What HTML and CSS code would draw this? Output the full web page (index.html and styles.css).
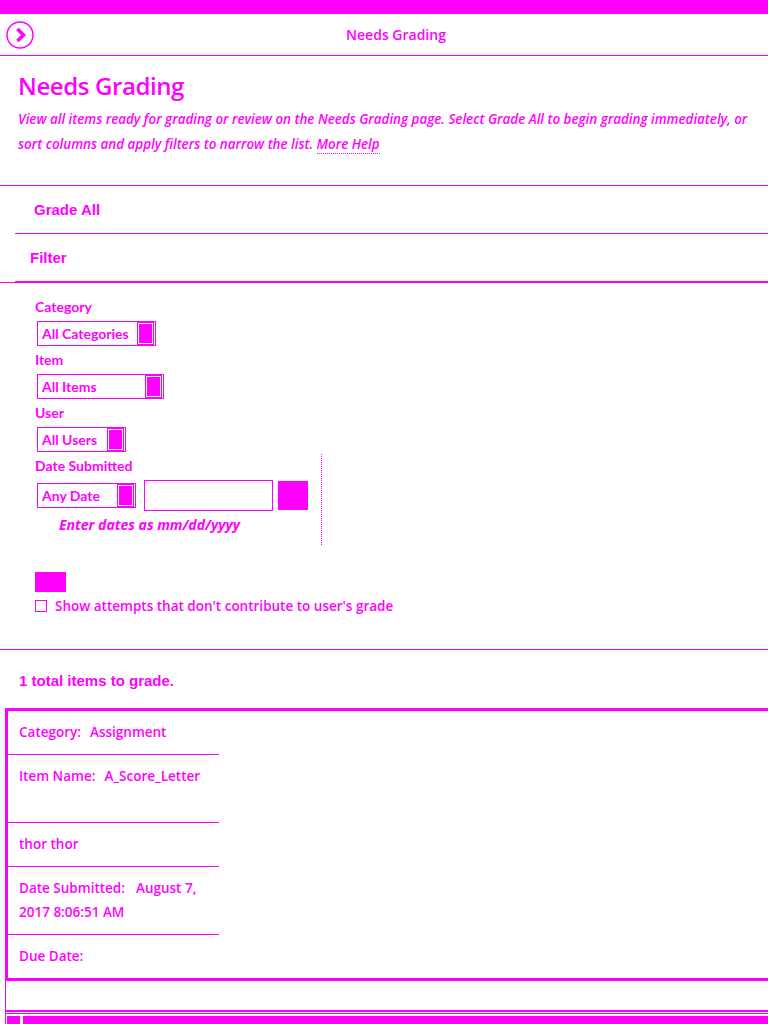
FILE: index.html
```html
<!DOCTYPE html>
<html lang="en">
<head>
<meta charset="utf-8">
<title>Needs Grading</title>
<link rel="stylesheet" href="styles.css">
</head>
<body>
<div class="topbar"></div>
<header class="header">
  <span class="back-icon">
    <svg width="28" height="28" viewBox="0 0 28 28" aria-hidden="true">
      <circle cx="14" cy="14" r="13" fill="none" stroke="#ff00ff" stroke-width="1.5"/>
      <polyline points="11.5,8 17.5,14 11.5,20" fill="none" stroke="#ff00ff" stroke-width="3.5"/>
    </svg>
  </span>
  <span class="header-title">Needs Grading</span>
</header>

<section class="intro">
  <h1 class="page-title">Needs Grading</h1>
  <p class="desc">View all items ready for grading or review on the Needs Grading page. Select Grade All to begin grading immediately, or sort columns and apply filters to narrow the list. <a class="help" href="#">More Help</a></p>
</section>

<ul class="actions">
  <li class="action action-grade">Grade All</li>
  <li class="action action-filter">Filter</li>
</ul>

<section class="filters">
  <div class="field">
    <div class="label">Category</div>
    <div class="select select-cat"><span class="select-text">All Categories</span><span class="arrow"></span></div>
  </div>
  <div class="field">
    <div class="label">Item</div>
    <div class="select select-item"><span class="select-text">All Items</span><span class="arrow"></span></div>
  </div>
  <div class="field">
    <div class="label">User</div>
    <div class="select select-user"><span class="select-text">All Users</span><span class="arrow"></span></div>
  </div>
  <div class="field date-group">
    <div class="label">Date Submitted</div>
    <div class="date-row">
      <div class="select select-date"><span class="select-text">Any Date</span><span class="arrow"></span></div>
      <div class="date-input"></div>
      <div class="date-btn"></div>
    </div>
    <p class="hint">Enter dates as mm/dd/yyyy</p>
  </div>
  <div class="apply-btn"></div>
  <div class="check-row"><span class="checkbox"></span><span class="check-label">Show attempts that don't contribute to user's grade</span></div>
</section>

<section class="results">
  <p class="count">1 total items to grade.</p>
  <div class="list-wrap">
    <div class="grid">
      <div class="card">
        <div class="row"><span class="key">Category:</span><span class="val">Assignment</span></div>
        <div class="row row-tall"><span class="key">Item Name:</span><span class="val">A_Score_Letter</span></div>
        <div class="row">thor thor</div>
        <div class="row row-tall"><span class="key key-wide">Date Submitted:</span><span class="val">August 7,</span> <span class="val">2017 8:06:51 AM</span></div>
        <div class="row row-last"><span class="key">Due Date:</span></div>
      </div>
    </div>
    <div class="footer">
      <div class="footer-line"></div>
      <div class="footer-bar"><span class="footer-a"></span><span class="footer-b"></span></div>
    </div>
  </div>
</section>
</body>
</html>
```

FILE: styles.css
```css
* { box-sizing: border-box; }

html, body {
  margin: 0;
  padding: 0;
  background: #ffffff;
  color: #ff00ff;
  font-family: "Open Sans", "Liberation Sans", sans-serif;
}

.topbar {
  height: 14px;
  background: #ff00ff;
}

.header {
  height: 42px;
  display: flex;
  align-items: center;
  border-bottom: 1px solid #ff00ff;
  padding-left: 6px;
}

.back-icon {
  width: 28px;
  height: 28px;
  display: flex;
}

.header-title {
  flex: 1;
  text-align: center;
  padding-right: 10px;
  font-size: 14px;
  font-weight: 600;
}

.intro {
  padding: 13px 10px 28px 18px;
}

.page-title {
  margin: 0;
  font-size: 24px;
  line-height: 34px;
  font-weight: 600;
  letter-spacing: -0.4px;
}

.desc {
  margin: 4px 0 0 0;
  font-size: 13.4px;
  line-height: 25px;
  font-style: italic;
  font-weight: 600;
}

.help {
  color: #ff00ff;
  text-decoration: none;
  border-bottom: 1px dotted #ff00ff;
}

.actions {
  list-style: none;
  margin: 0;
  padding: 0;
  border-top: 1px solid #ff00ff;
}

.action {
  margin-left: 15px;
  height: 48px;
  line-height: 47px;
  border-bottom: 1px solid #ff00ff;
  font-family: "Liberation Sans", Arial, sans-serif;
  font-weight: 700;
  font-size: 15px;
}

.action-grade { padding-left: 19px; }
.action-filter { padding-left: 15px; }

.filters {
  border-top: 1px solid #ff00ff;
  padding: 15px 0 34px 35px;
  display: flex;
  flex-direction: column;
  align-items: flex-start;
}

.field {
  display: flex;
  flex-direction: column;
  align-items: flex-start;
  margin-bottom: 5px;
}

.label {
  font-family: "Lato", "Open Sans", sans-serif;
  font-weight: 700;
  font-size: 14px;
  line-height: 18px;
  margin-bottom: 5px;
}

.select {
  margin-left: 2px;
  height: 25px;
  border: 1px solid #ff00ff;
  display: flex;
  align-items: center;
  justify-content: space-between;
  padding: 0 1px 0 4px;
}

.select-text {
  font-family: "Lato", "Open Sans", sans-serif;
  font-weight: 700;
  font-size: 14px;
  line-height: 18px;
}

.arrow {
  width: 17px;
  height: 23px;
  border: 1px solid #ff00ff;
  padding: 1px;
  background: #ff00ff;
  background-clip: content-box;
}

.select-cat { width: 119px; }
.select-item { width: 127px; }
.select-user { width: 89px; }
.select-date { width: 99px; }

.date-group {
  width: 287px;
  margin-top: -3px;
  padding-top: 3px;
  padding-bottom: 11px;
  border-right: 1px dotted #ff00ff;
  margin-bottom: 27px;
}

.date-row {
  display: flex;
  align-items: center;
  height: 31px;
}

.date-input {
  margin-left: 8px;
  width: 129px;
  height: 31px;
  border: 1px solid #ff00ff;
}

.date-btn {
  margin-left: 5px;
  width: 30px;
  height: 29px;
  background: #ff00ff;
}

.hint {
  margin: 5px 0 0 24px;
  font-size: 14px;
  line-height: 18px;
  font-style: italic;
  font-weight: 700;
}

.apply-btn {
  width: 31px;
  height: 20px;
  background: #ff00ff;
}

.check-row {
  display: flex;
  align-items: center;
  margin-top: 5px;
  height: 18px;
}

.checkbox {
  width: 12px;
  height: 12px;
  border: 1px solid #ff00ff;
  margin-right: 8px;
}

.check-label {
  font-size: 13.5px;
  line-height: 18px;
  font-weight: 600;
}

.results {
  border-top: 1px solid #ff00ff;
  padding-top: 22px;
}

.count {
  margin: 0 0 18px 19px;
  font-family: "Liberation Sans", Arial, sans-serif;
  font-weight: 700;
  font-size: 15px;
  line-height: 18px;
}

.list-wrap {
  margin-left: 5px;
  border-left: 1px solid #ff00ff;
}

.grid {
  border-top: 3px solid #ff00ff;
  border-left: 2px solid #ff00ff;
  border-bottom: 3px solid #ff00ff;
}

.card {
  width: 211px;
}

.row {
  padding: 9px 0 10px 11px;
  line-height: 24px;
  font-size: 13.5px;
  font-weight: 600;
  border-bottom: 1px solid #ff00ff;
  min-height: 44px;
}

.row-tall { min-height: 68px; }
.row-last { border-bottom: none; min-height: 43px; }

.key { margin-right: 9px; }
.key-wide { margin-right: 11px; }

.footer {
  padding-top: 29px;
}

.footer-line {
  border-top: 2px solid #ff00ff;
  border-bottom: 1px solid #ff00ff;
  height: 4px;
  margin-bottom: 2px;
}

.footer-bar {
  display: flex;
  height: 10px;
  gap: 3px;
  margin-left: 1px;
}

.footer-a {
  width: 13px;
  background: #ff00ff;
}

.footer-b {
  flex: 1;
  background: #ff00ff;
}
```
